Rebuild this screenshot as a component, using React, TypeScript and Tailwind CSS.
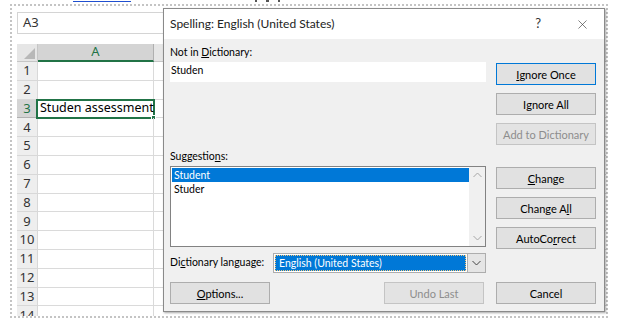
import { X } from "lucide-react";

const ROWS = [1, 2, 3, 4, 5, 6, 7, 8, 9, 10, 11, 12, 13, 14];

function Chevron({ up = false, color = "#a6a6a6" }: { up?: boolean; color?: string }) {
  return (
    <svg width="9" height="6" viewBox="0 0 9 6">
      <polyline
        points={up ? "0.5,5 4.5,1 8.5,5" : "0.5,1 4.5,5 8.5,1"}
        fill="none"
        stroke={color}
        strokeWidth="1"
      />
    </svg>
  );
}

function Btn({
  children,
  focused = false,
  disabled = false,
}: {
  children: React.ReactNode;
  focused?: boolean;
  disabled?: boolean;
}) {
  return (
    <div
      className={`w-[100px] h-[22px] flex items-center justify-center text-[11px] leading-none border ${
        focused
          ? "border-[#0078d7] bg-[#e1e1e1] text-black"
          : disabled
          ? "border-[#c4c4c4] bg-[#e3e3e3] text-[#8d8d8d]"
          : "border-[#adadad] bg-[#e1e1e1] text-black"
      }`}
    >
      {children}
    </div>
  );
}

function Sheet() {
  return (
    <div className="ml-[10px] w-[598px] h-[314px] border-2 border-dotted border-[#c4c4c4] overflow-hidden bg-white">
      {/* name box */}
      <div className="pt-[6px] pl-[5px]">
        <div className="w-[200px] h-[22px] border border-[#d4d4d4] bg-white flex items-center pl-[5px] text-[13px] text-[#333] font-['Noto_Sans',sans-serif]">
          A3
        </div>
      </div>
      <div className="pl-[5px] pt-[10px]">
        {/* column headers */}
        <div className="flex h-[18px]">
          <div className="w-[21px] h-full bg-[#e6e6e6] border-r border-b border-[#c6c6c6] relative">
            <svg className="absolute right-[2px] bottom-[2px]" width="11" height="11" viewBox="0 0 11 11">
              <polygon points="11,0 11,11 0,11" fill="#b8b8b8" />
            </svg>
          </div>
          <div className="w-[116px] h-full bg-[#d4d4d4] border-r border-[#b0b0b0] border-b-2 border-b-[#217346] flex items-center justify-center text-[13px] text-[#217346] font-['Noto_Sans',sans-serif]">
            A
          </div>
          <div className="flex-1 h-full bg-[#e6e6e6] border-b border-[#c6c6c6]" />
        </div>
        {/* rows */}
        {ROWS.map((r) => (
          <div key={r} className="flex h-[18.8px]">
            <div
              className={`w-[21px] h-full border-r border-b flex items-center justify-center text-[13px] font-['Noto_Sans',sans-serif] ${
                r === 3
                  ? "bg-[#d4d4d4] text-[#217346] border-[#b0b0b0]"
                  : "bg-[#eeeeee] text-[#333] border-[#d8d8d8]"
              }`}
            >
              {r}
            </div>
            <div className="w-[116px] h-full border-r border-b border-[#dadada] relative">
              {r === 3 && (
                <div className="absolute -left-[2px] -top-[1px] w-[119px] h-[20px] border-2 border-[#217346] flex items-center pl-[2px] text-[12.5px] text-black whitespace-nowrap font-['Noto_Sans',sans-serif]">
                  Studen assessment
                  <div className="absolute -right-[3px] -bottom-[3px] w-[5px] h-[5px] bg-[#217346] border border-white" />
                </div>
              )}
            </div>
            <div className="flex-1 h-full border-b border-[#dadada]" />
          </div>
        ))}
      </div>
    </div>
  );
}

function Dialog() {
  return (
    <div className="absolute left-[163px] top-[8px] w-[442px] h-[304px] border border-[#8a8a8a] bg-[#f0f0f0] shadow-[1px_1px_2px_rgba(0,0,0,0.35)] font-['Lato',sans-serif] text-black">
      {/* title bar */}
      <div className="h-[30px] bg-white flex items-center pl-[6px] pr-[14px]">
        <span className="text-[12px] text-[#222]">Spelling: English (United States)</span>
        <span className="ml-auto text-[13px] text-[#333] mr-[34px]">?</span>
        <X size={15} strokeWidth={1} color="#333" />
      </div>
      {/* body */}
      <div className="flex pl-[6px] pr-[8px]">
        {/* left column */}
        <div className="w-[316px]">
          <div className="mt-[5px] h-[16px] leading-[16px] text-[10.5px]">
            Not in <u>D</u>ictionary:
          </div>
          <div className="mt-[2px] h-[20px] bg-white pt-[1px] pl-[1px] leading-[14px] text-[10.5px]">Studen</div>
          <div className="mt-[66px] h-[16px] leading-[16px] text-[10.5px]">
            Suggestio<u>n</u>s:
          </div>
          <div className="mt-[2px] h-[81px] bg-white border border-[#828282] flex">
            <div className="flex-1 pt-[1px] pl-[1px] text-[10.5px]">
              <div className="h-[14px] leading-[14px] bg-[#0078d7] text-white pl-[2px]">Student</div>
              <div className="h-[14px] leading-[14px] pl-[2px]">Studer</div>
            </div>
            <div className="w-[16px] bg-[#f0f0f0] flex flex-col items-center justify-between py-[5px]">
              <Chevron up />
              <Chevron />
            </div>
          </div>
          <div className="mt-[6px] flex items-center">
            <span className="w-[103px] text-[10.5px] whitespace-nowrap">
              Di<u>c</u>tionary language:
            </span>
            <div className="flex-1 h-[20px] border border-[#adadad] bg-white flex">
              <div className="flex-1 m-[1px] bg-[#0078d7] border border-dotted border-[#f5c77a] text-white text-[10.5px] leading-[14px] pl-[3px]">
                English (United States)
              </div>
              <div className="w-[18px] border-l border-[#adadad] bg-[#e5e5e5] flex items-center justify-center">
                <Chevron color="#444" />
              </div>
            </div>
          </div>
        </div>
        {/* right column */}
        <div className="ml-[10px] flex flex-col">
          <div className="mt-[24px]">
            <Btn focused>
              <u>I</u>gnore Once
            </Btn>
          </div>
          <div className="mt-[8px]">
            <Btn>
              I<u>g</u>nore All
            </Btn>
          </div>
          <div className="mt-[8px]">
            <Btn disabled>Add to Dictionary</Btn>
          </div>
          <div className="mt-[22px]">
            <Btn>
              <u>C</u>hange
            </Btn>
          </div>
          <div className="mt-[8px]">
            <Btn>
              Change A<u>l</u>l
            </Btn>
          </div>
          <div className="mt-[8px]">
            <Btn>
              AutoCo<u>r</u>rect
            </Btn>
          </div>
        </div>
      </div>
      {/* bottom buttons */}
      <div className="mt-[9px] flex pl-[6px] pr-[8px]">
        <Btn>
          <u>O</u>ptions...
        </Btn>
        <div className="ml-auto">
          <Btn disabled>Undo Last</Btn>
        </div>
        <div className="ml-[12px]">
          <Btn>Cancel</Btn>
        </div>
      </div>
    </div>
  );
}

export default function App() {
  return (
    <div className="w-[630px] h-[322px] bg-white relative overflow-hidden">
      {/* clipped text line above the sheet */}
      <div className="h-[4px] relative overflow-hidden">
        <div className="absolute left-[73px] top-[1px] w-[58px] h-[1px] bg-[#1f4fd0]" />
        <div className="absolute left-[255px] top-[0px] w-[36px] h-[2px] flex gap-[9px]">
          <div className="w-[2px] h-[2px] bg-[#555]" />
          <div className="w-[3px] h-[2px] bg-[#555]" />
          <div className="w-[2px] h-[2px] bg-[#555]" />
        </div>
      </div>
      <Sheet />
      <Dialog />
    </div>
  );
}
